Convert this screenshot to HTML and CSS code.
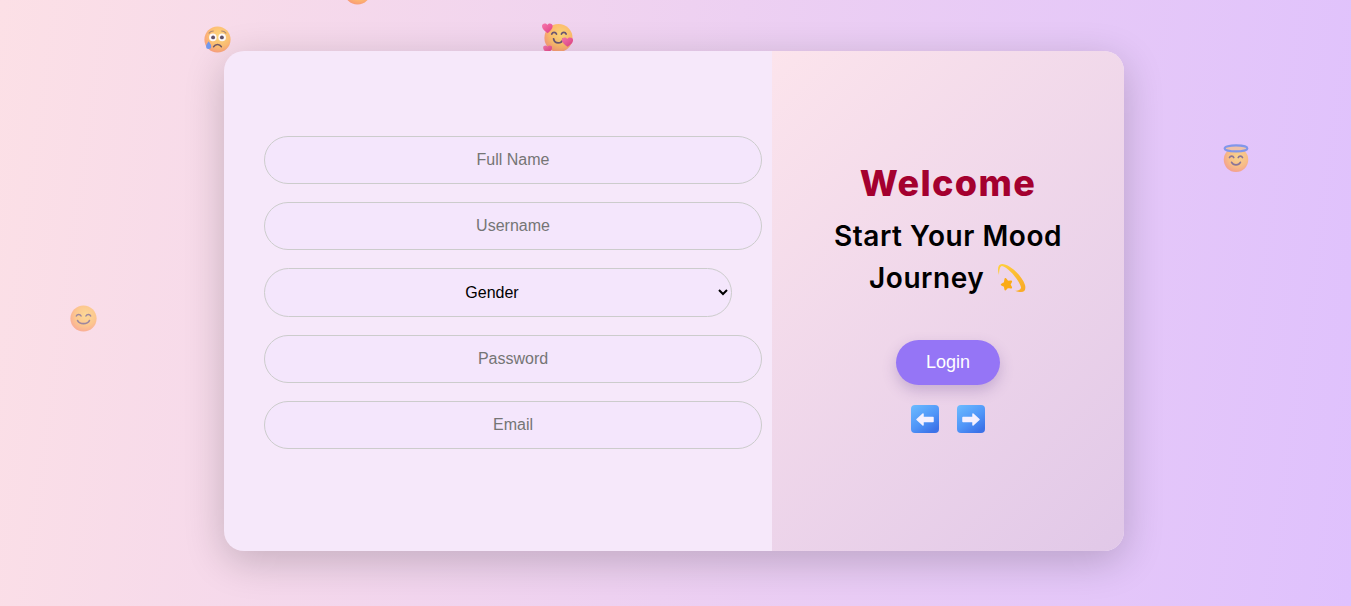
FILE: index.html
```html
<!DOCTYPE html>
<html lang="en">
<head>
<meta charset="utf-8">
<title>Mood Journey</title>
<link rel="stylesheet" href="styles.css">
</head>
<body>
<svg class="defs" width="0" height="0" aria-hidden="true">
  <defs>
    <radialGradient id="face" cx="0.58" cy="0.38" r="0.72">
      <stop offset="0" stop-color="#ffd86c"/>
      <stop offset="0.55" stop-color="#ffbb60"/>
      <stop offset="1" stop-color="#f8886e"/>
    </radialGradient>
    <linearGradient id="heart" x1="0" y1="0" x2="1" y2="1">
      <stop offset="0" stop-color="#f870a8"/>
      <stop offset="1" stop-color="#e2307a"/>
    </linearGradient>
    <linearGradient id="key" x1="0" y1="0" x2="0.7" y2="1">
      <stop offset="0" stop-color="#6cbcff"/>
      <stop offset="0.6" stop-color="#5096f8"/>
      <stop offset="1" stop-color="#3c72e8"/>
    </linearGradient>
    <linearGradient id="swirl" x1="0" y1="0" x2="1" y2="1">
      <stop offset="0" stop-color="#ffd23f"/>
      <stop offset="1" stop-color="#f9a825"/>
    </linearGradient>
    <symbol id="e-smile" viewBox="0 0 32 32">
      <circle cx="16" cy="16" r="15.500" fill="url(#face)"/>
      <path d="M7.500 13c1-2.400 4.400-2.600 5.600 0M18.900 13c1.200-2.600 4.600-2.400 5.600 0" fill="none" stroke="#6d5a78" stroke-width="1.800" stroke-linecap="round"/>
      <path d="M9 18.500c2.500 4.800 11.500 4.800 14 0" fill="none" stroke="#6d5a78" stroke-width="2" stroke-linecap="round"/>
    </symbol>
    <symbol id="e-sad" viewBox="0 0 32 32">
      <circle cx="16" cy="16" r="15.500" fill="url(#face)"/>
      <path d="M6 8.500c1.500-1.800 3.300-2.500 5-2.500M21 6c1.700 0 3.500.7 5 2.500" fill="none" stroke="#a07c62" stroke-width="1.300" stroke-linecap="round"/>
      <circle cx="10.500" cy="13.500" r="4.500" fill="#fff"/>
      <circle cx="21.500" cy="13.500" r="4.500" fill="#fff"/>
      <circle cx="10.800" cy="13.500" r="2.300" fill="#4a3c52"/>
      <circle cx="21.200" cy="13.500" r="2.300" fill="#4a3c52"/>
      <path d="M11.500 24.500c2-3.400 7-3.400 9 0" fill="none" stroke="#5d4350" stroke-width="2" stroke-linecap="round"/>
      <path d="M5.500 18c1.700 2.400 3 4.200 3 6.200a3 3 0 0 1-6 0c0-2 1.300-3.800 3-6.200z" fill="#5a8df0"/>
    </symbol>
    <symbol id="e-hearts" viewBox="0 0 32 32">
      <circle cx="17" cy="16.500" r="14.500" fill="url(#face)"/>
      <path d="M10 12.500c1-2.400 4-2.400 5 0M20 12.500c1-2.400 4-2.400 5 0" fill="none" stroke="#5f4b66" stroke-width="1.700" stroke-linecap="round"/>
      <path d="M12 17.500c1 5.500 8 5.500 10 0" fill="none" stroke="#5f4b66" stroke-width="1.900" stroke-linecap="round"/>
      <path d="M5.800 11.500C2.500 9.500 0 7 0 4.200 0 1.500 3.800.4 5.500 3c1.800-2.600 5.500-1.500 5.500 1.200 0 2.800-2.300 5.300-5.200 7.300z" fill="url(#heart)"/>
      <path d="M26.500 25.500C23 23.500 20.300 21 20.500 18.300c.2-2.500 3.900-3.200 5.500-.8 1.800-2.200 5.600-1.700 6 .8.400 2.700-2.300 5.200-5.500 7.200z" fill="url(#heart)"/>
      <path d="M5.800 32c-2.900-1.700-4.800-3.600-4.600-5.700.2-2 3.100-2.700 4.600-.9 1.500-1.800 4.400-1.100 4.600.9.200 2.100-1.700 4-4.600 5.700z" fill="url(#heart)"/>
    </symbol>
    <symbol id="e-halo" viewBox="0 0 32 32">
      <circle cx="16" cy="18" r="14" fill="url(#face)"/>
      <ellipse cx="16" cy="5" rx="13" ry="3.400" fill="#f3c08e" stroke="#6187e6" stroke-width="2.400"/>
      <path d="M8.500 15.500c1-2.200 4-2.200 5 0M18.500 15.500c1-2.200 4-2.200 5 0" fill="none" stroke="#6d5a78" stroke-width="1.800" stroke-linecap="round"/>
      <path d="M11 21c2 3.800 8 3.800 10 0" fill="none" stroke="#6d5a78" stroke-width="2" stroke-linecap="round"/>
    </symbol>
    <symbol id="e-left" viewBox="0 0 28 28">
      <rect width="28" height="28" rx="4" fill="url(#key)"/>
      <path d="M6 14.500l6-5.500v3.500h10v4H12v3.500z" fill="#f6f1ff" stroke="#f6f1ff" stroke-width="1.500" stroke-linejoin="round"/>
    </symbol>
    <symbol id="e-right" viewBox="0 0 28 28">
      <rect width="28" height="28" rx="4" fill="url(#key)"/>
      <path d="M22 14.500l-6-5.500v3.500H6v4h10v3.500z" fill="#f6f1ff" stroke="#f6f1ff" stroke-width="1.500" stroke-linejoin="round"/>
    </symbol>
    <symbol id="e-dizzy" viewBox="0 0 32 32">
      <path d="M4 12C2 6 3 1 7 1c7 0 20 11 23 21 1 4 0 7-4 7-3 0-5-.5-6-1.500 2 .5 5 0 6-2.500.5-4-11-20-19-22-2 0-3 4-3 9.500z" fill="url(#swirl)"/>
      <path d="M10.500 16l2.200 2.800 3.400-.3-1.600 3 1.600 3-3.400-.6-2.300 2.500-.6-3.400-3-1.400 3-1.600z" fill="#fbab15" stroke="#fbab15" stroke-width="2" stroke-linejoin="round"/>
    </symbol>
  </defs>
</svg>

<svg class="float float-top"><use href="#e-smile"/></svg>
<svg class="float float-sad"><use href="#e-sad"/></svg>
<svg class="float float-hearts"><use href="#e-hearts"/></svg>
<svg class="float float-halo"><use href="#e-halo"/></svg>
<svg class="float float-smile"><use href="#e-smile"/></svg>

<main class="card">
  <form class="form-panel">
    <input class="field" type="text" placeholder="Full Name">
    <input class="field" type="text" placeholder="Username">
    <select class="field field-select">
      <option>Gender</option>
      <option>Female</option>
      <option>Male</option>
      <option>Other</option>
    </select>
    <input class="field" type="password" placeholder="Password">
    <input class="field" type="email" placeholder="Email">
  </form>
  <section class="welcome-panel">
    <h1 class="welcome-title">Welcome</h1>
    <h2 class="welcome-sub">Start Your Mood<br>Journey <svg class="dizzy"><use href="#e-dizzy"/></svg></h2>
    <button class="login" type="button">Login</button>
    <div class="arrows">
      <svg class="arrow"><use href="#e-left"/></svg>
      <svg class="arrow"><use href="#e-right"/></svg>
    </div>
  </section>
</main>
</body>
</html>
```

FILE: styles.css
```css
* {
  box-sizing: border-box;
}

html,
body {
  height: 100%;
}

body {
  margin: 0;
  padding: 0 3px 4px 0;
  display: flex;
  align-items: center;
  justify-content: center;
  overflow: hidden;
  background: linear-gradient(98deg, #fce0e6, #dfc1fd);
  font-family: "Liberation Sans", Arial, sans-serif;
}

.defs {
  position: absolute;
}

.float {
  position: absolute;
  width: 27px;
  height: 27px;
}

.float-top {
  left: 344px;
  top: -22px;
  opacity: 0.9;
}

.float-sad {
  left: 204px;
  top: 26px;
  opacity: 0.85;
}

.float-hearts {
  left: 542px;
  top: 22px;
  width: 31px;
  height: 31px;
  opacity: 0.9;
}

.float-halo {
  left: 1222px;
  top: 144px;
  width: 28px;
  height: 28px;
  opacity: 0.75;
}

.float-smile {
  left: 70px;
  top: 305px;
  opacity: 0.65;
}

.card {
  position: relative;
  display: flex;
  width: 900px;
  height: 500px;
  border-radius: 20px;
  overflow: hidden;
  background: #f6e8fa;
  box-shadow: 0 10px 40px rgba(0, 0, 0, 0.2);
}

.form-panel {
  width: 548px;
  padding: 0 10px 0 40px;
  display: flex;
  flex-direction: column;
  justify-content: center;
  align-items: flex-start;
}

.field {
  width: 100%;
  height: 48px;
  margin-bottom: 18px;
  padding: 0 20px;
  border: 1px solid #ccc;
  border-radius: 25px;
  background: #f4e6fc;
  color: #000;
  font: 16px "Liberation Sans", Arial, sans-serif;
  text-align: center;
}

.field-select {
  width: 468px;
  height: 49px;
}

.welcome-panel {
  width: 352px;
  display: flex;
  flex-direction: column;
  align-items: center;
  justify-content: center;
  background: linear-gradient(135deg, #fce4ec, #e1c8e8);
  text-align: center;
}

.welcome-title {
  margin: 0 0 5px;
  font: 800 36px/54px Inter, sans-serif;
  letter-spacing: 1.4px;
  color: #a4002f;
}

.welcome-sub {
  margin: 0 0 41px;
  font: 600 28px/42px Inter, sans-serif;
  letter-spacing: 0.55px;
  color: #000;
}

.dizzy {
  width: 32px;
  height: 32px;
  margin-left: 3px;
  vertical-align: -7px;
}

.login {
  width: 104px;
  height: 45px;
  border: 0;
  border-radius: 25px;
  background: #9575f6;
  box-shadow: 0 6px 14px rgba(90, 60, 140, 0.25);
  color: #fff;
  font: 18px "Liberation Sans", Arial, sans-serif;
}

.arrows {
  display: flex;
  gap: 18px;
  height: 41px;
  margin-top: 20px;
}

.arrow {
  width: 28px;
  height: 28px;
}
```
